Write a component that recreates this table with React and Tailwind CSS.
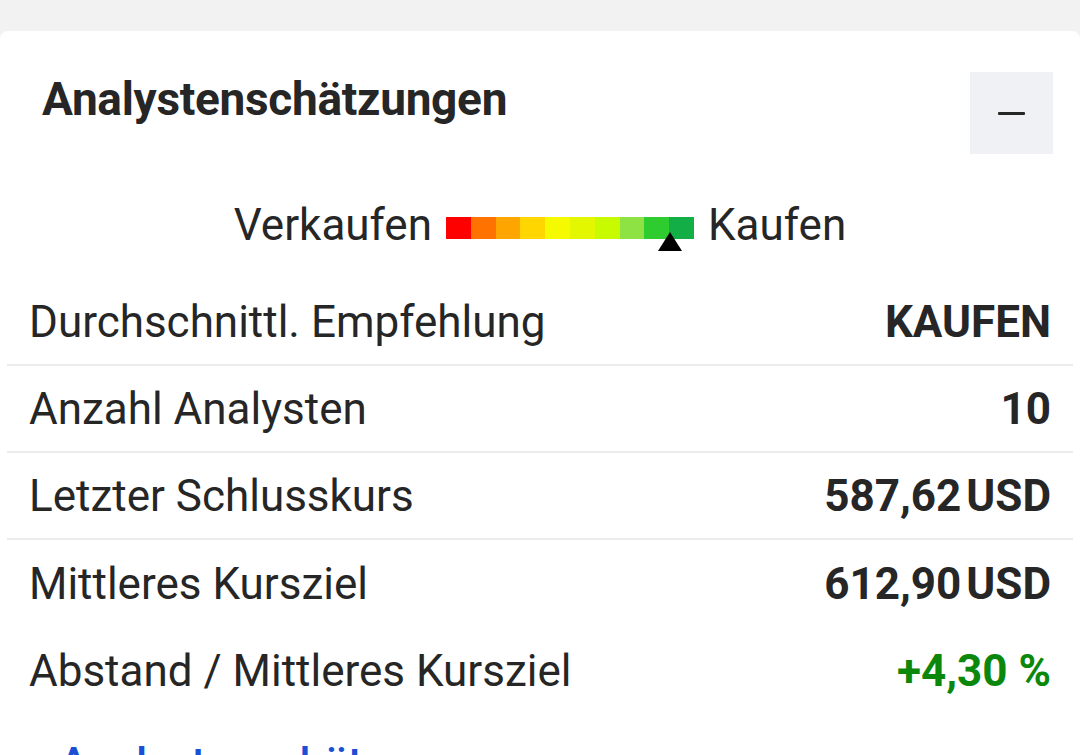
import React from "react";

const segs = ["#ff0000","#ff7200","#ffa500","#ffd600","#f6fa00","#e3f700","#c8fb00","#8fe244","#2ecc2e","#14ae46"];

const rows = [
  { label: "Durchschnittl. Empfehlung", value: <span>KAUFEN</span> },
  { label: "Anzahl Analysten", value: <span>10</span> },
  { label: "Letzter Schlusskurs", value: <span>587,62<span className="ml-[5px]">USD</span></span> },
  { label: "Mittleres Kursziel", value: <span>612,90<span className="ml-[5px]">USD</span></span>, noBorder: true },
  { label: "Abstand / Mittleres Kursziel", value: <span className="text-[#0b880b]">+4,30 %</span>, noBorder: true },
];

export default function App() {
  return (
    <div className="w-[1080px] h-[755px] overflow-hidden bg-[#f2f2f2] pt-[31px]" style={{ fontFamily: "Roboto, 'Noto Sans', sans-serif" }}>
      <div className="bg-white rounded-t-[8px] px-[7px] h-[800px] text-[#262626]">
        <div className="flex justify-between items-start">
          <h2 className="pl-[35px] pt-[40px] text-[46px] leading-[56px] font-bold tracking-[-0.3px]">Analystenschätzungen</h2>
          <button className="mt-[41px] mr-[20px] w-[83px] h-[82px] bg-[#eff1f4] flex items-center justify-center">
            <span className="block w-[27px] h-[3px] bg-[#262626] rounded-[1px]" />
          </button>
        </div>
        <div className="flex items-center justify-center mt-[43px] h-[56px] gap-[14px]">
          <span className="text-[44px] leading-[56px]">Verkaufen</span>
          <div className="relative flex h-[22px] w-[248px] mt-[6px]">
            {segs.map((c, i) => (
              <div key={i} className="flex-1 h-full" style={{ backgroundColor: c }} />
            ))}
            <svg className="absolute left-[212px] top-[15px]" width="24" height="19" viewBox="0 0 24 19">
              <path d="M12 0 L24 19 L0 19 Z" fill="#000" />
            </svg>
          </div>
          <span className="text-[44px] leading-[56px]">Kaufen</span>
        </div>
        <div className="mt-[26px]">
          {rows.map((r, i) => (
            <div key={i} className={`flex items-center justify-between h-[87px] px-[22px] ${r.noBorder ? "" : "border-b-2 border-[#ececec]"}`}>
              <span className="text-[44px] leading-none">{r.label}</span>
              <span className="text-[44px] leading-none font-bold">{r.value}</span>
            </div>
          ))}
        </div>
        <div className="flex items-center gap-[20px] pl-[22px] mt-[28px]">
          <svg width="10" height="16" viewBox="0 0 10 16"><path d="M2 2 L8 8 L2 14" stroke="#1a4fd6" strokeWidth="3" fill="none" /></svg>
          <span className="text-[44px] leading-none font-medium text-[#1a4fd6]">Analystenschätzungen</span>
        </div>
      </div>
    </div>
  );
}
